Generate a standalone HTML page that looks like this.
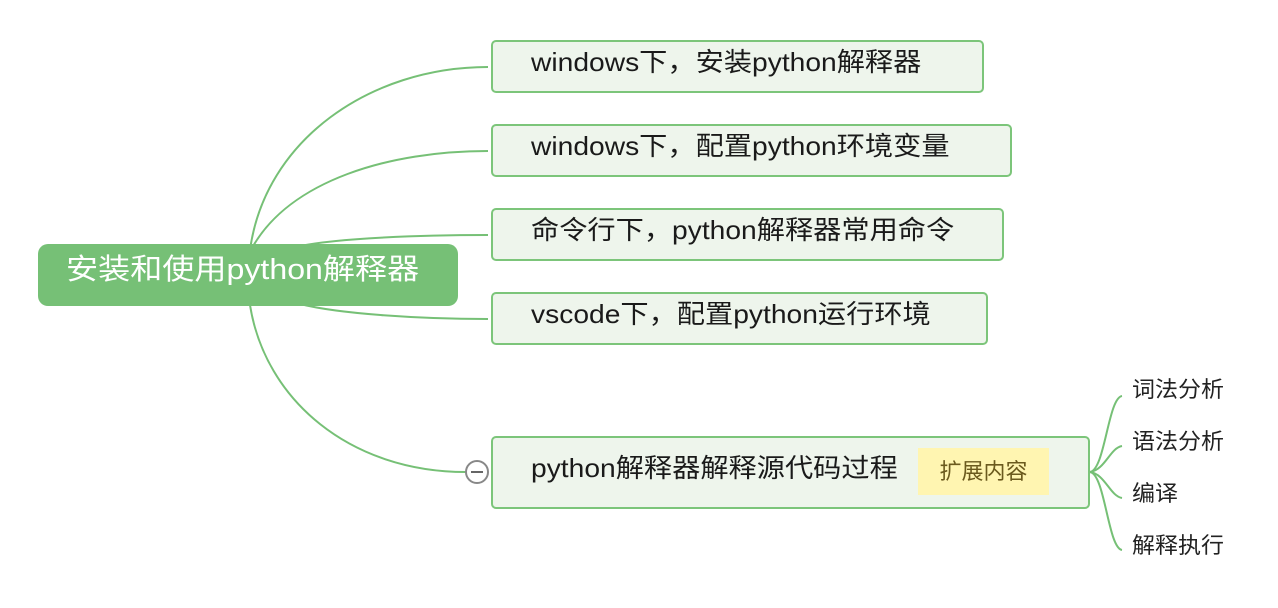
<!DOCTYPE html>
<html><head><meta charset="utf-8"><style>
body{margin:0;width:1278px;height:608px;background:#fff;position:relative;overflow:hidden;font-family:"Liberation Sans","Noto Sans CJK SC",sans-serif}
.b{position:absolute;left:491px;box-sizing:border-box;border:2px solid #7cc57a;background:#eef5ec;border-radius:5px;height:53px}
.t{position:absolute;left:531px;font-size:26px;color:#1a1a1a;line-height:30px;white-space:nowrap;transform:scaleX(1.085);transform-origin:0 0}
.s{position:absolute;left:1132px;font-size:22px;color:#222;line-height:26px;white-space:nowrap;transform:scaleX(1.045);transform-origin:0 0}
</style></head><body>
<svg width="1278" height="608" style="position:absolute;left:0;top:0" fill="none" stroke="#76c076" stroke-width="2">
<path d="M250 250 C265 140 370 67 488 67"/>
<path d="M252 248 C290 180 390 151 488 151"/>
<path d="M300 246 C340 238 420 235 488 235"/>
<path d="M300 304 C340 314 420 319 488 319"/>
<path d="M250 305 C265 400 350 472 466 472"/>
<path d="M1090 472 C1105 470 1108 398 1122 396"/>
<path d="M1090 472 C1105 470 1110 448 1122 446"/>
<path d="M1090 472 C1105 474 1110 496 1122 498"/>
<path d="M1090 472 C1105 474 1108 548 1122 550"/>
</svg>
<div style="position:absolute;left:38px;top:244px;width:420px;height:62px;background:#76c076;border-radius:10px"></div>
<div style="position:absolute;left:66px;top:252px;font-size:29px;color:#fff;line-height:36px;white-space:nowrap;transform:scaleX(1.107);transform-origin:0 0">安装和使用python解释器</div>
<div class="b" style="top:40px;width:493px"></div><div class="t" style="top:47px">windows下，安装python解释器</div>
<div class="b" style="top:124px;width:521px"></div><div class="t" style="top:131px">windows下，配置python环境变量</div>
<div class="b" style="top:208px;width:513px"></div><div class="t" style="top:215px">命令行下，python解释器常用命令</div>
<div class="b" style="top:292px;width:497px"></div><div class="t" style="top:299px">vscode下，配置python运行环境</div>
<div class="b" style="top:436px;width:599px;height:73px"></div><div class="t" style="top:453px">python解释器解释源代码过程</div>
<div style="position:absolute;left:918px;top:448px;width:131px;height:47px;background:#fff5b1;color:#6b5a1e;font-size:22px;line-height:47px;text-align:center">扩展内容</div>
<svg width="26" height="26" style="position:absolute;left:464px;top:459px"><circle cx="13" cy="13" r="11" fill="#fff" stroke="#888" stroke-width="2"/><line x1="7" y1="13" x2="19" y2="13" stroke="#666" stroke-width="2"/></svg>
<div class="s" style="top:377px">词法分析</div>
<div class="s" style="top:429px">语法分析</div>
<div class="s" style="top:481px">编译</div>
<div class="s" style="top:533px">解释执行</div>
</body></html>
